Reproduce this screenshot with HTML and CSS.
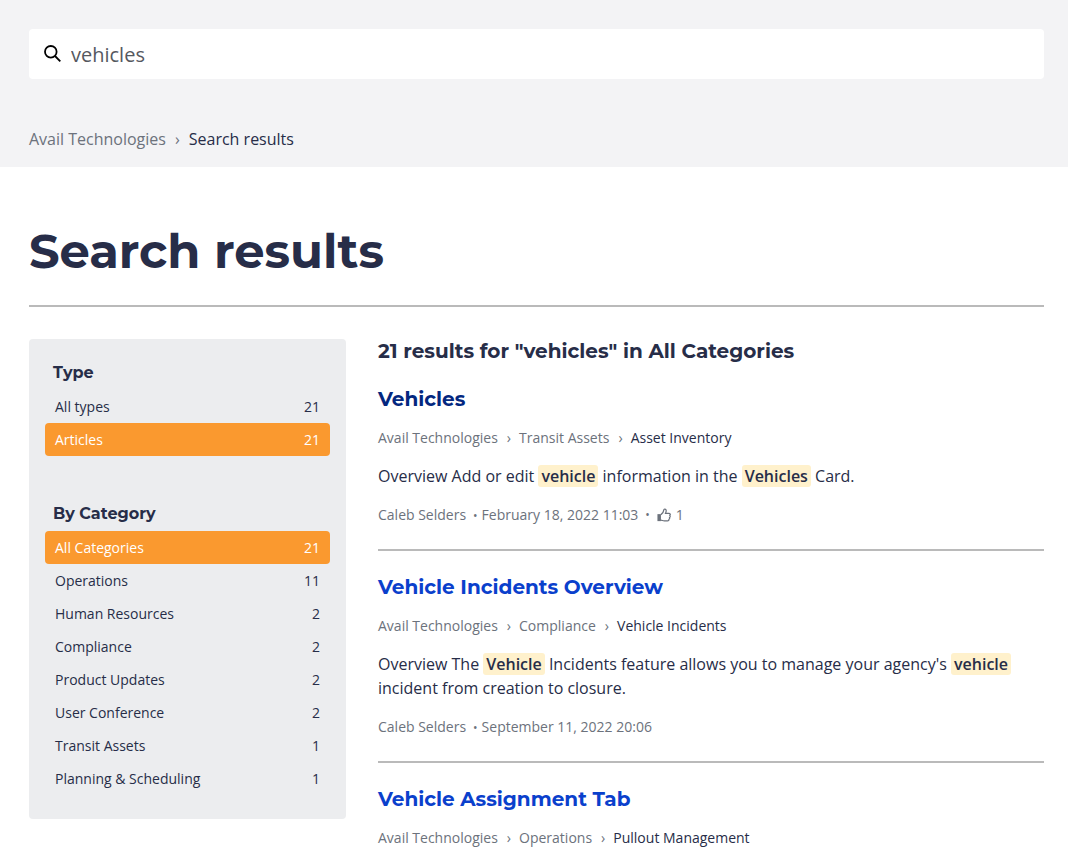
FILE: index.html
```html
<!DOCTYPE html>
<html lang="en">
<head>
<meta charset="utf-8">
<meta name="viewport" content="width=device-width, initial-scale=1">
<title>Search results – Avail Technologies</title>
<link rel="stylesheet" href="styles.css">
</head>
<body>
<header class="hero">
  <form class="search" role="search">
    <svg class="search-icon" viewBox="0 0 18 18" aria-hidden="true"><circle cx="6.800" cy="6.800" r="5.800"/><path d="M11 11l5.300 5.300"/></svg>
    <input class="search-input" type="search" value="vehicles" aria-label="Search">
  </form>
  <nav class="crumbs crumbs-page" aria-label="Breadcrumb">
    <a href="#">Avail Technologies</a><span class="sep">›</span><span class="current">Search results</span>
  </nav>
</header>
<main class="page">
  <h1 class="page-title">Search results</h1>
  <div class="columns">
    <aside class="sidebar">
      <section>
        <h2 class="filter-title">Type</h2>
        <ul class="filters">
          <li><a class="filter" href="#"><span>All types</span><span>21</span></a></li>
          <li><a class="filter active" href="#" aria-current="page"><span>Articles</span><span>21</span></a></li>
        </ul>
      </section>
      <section>
        <h2 class="filter-title">By Category</h2>
        <ul class="filters">
          <li><a class="filter active" href="#" aria-current="page"><span>All Categories</span><span>21</span></a></li>
          <li><a class="filter" href="#"><span>Operations</span><span>11</span></a></li>
          <li><a class="filter" href="#"><span>Human Resources</span><span>2</span></a></li>
          <li><a class="filter" href="#"><span>Compliance</span><span>2</span></a></li>
          <li><a class="filter" href="#"><span>Product Updates</span><span>2</span></a></li>
          <li><a class="filter" href="#"><span>User Conference</span><span>2</span></a></li>
          <li><a class="filter" href="#"><span>Transit Assets</span><span>1</span></a></li>
          <li><a class="filter" href="#"><span>Planning &amp; Scheduling</span><span>1</span></a></li>
        </ul>
      </section>
    </aside>
    <section class="results">
      <h2 class="results-title">21 results for "vehicles" in All Categories</h2>
      <article class="result">
        <h3 class="result-title"><a class="focused" href="#">Vehicles</a></h3>
        <nav class="crumbs" aria-label="Article location">
          <a href="#">Avail Technologies</a><span class="sep">›</span><a href="#">Transit Assets</a><span class="sep">›</span><a class="current" href="#">Asset Inventory</a>
        </nav>
        <p class="excerpt">Overview Add or edit <mark>vehicle</mark> information in the <mark>Vehicles</mark> Card.</p>
        <div class="meta">
          <span>Caleb Selders</span><span class="dated">February 18, 2022 11:03</span>
          <span class="votes"><svg class="thumb" viewBox="0 0 16 16" aria-hidden="true"><path class="cuff" d="M.5 7h4v8h-4z"/><path d="M4.500 7.600C6.400 6.500 7.500 4.500 7.800 2.200c.2-1.300 2.500-1.100 2.700.7.1 1.200-.3 2.300-.8 3.300h3.800c1.800 0 2.100 1.600 1.100 2.500.8.8.6 1.900-.3 2.300.4.9.1 1.600-.7 1.900.2 1-.3 1.800-1.500 1.800H8.300c-1.400 0-2.400-.7-3.800-.9"/></svg>1</span>
        </div>
      </article>
      <article class="result">
        <h3 class="result-title"><a href="#">Vehicle Incidents Overview</a></h3>
        <nav class="crumbs" aria-label="Article location">
          <a href="#">Avail Technologies</a><span class="sep">›</span><a href="#">Compliance</a><span class="sep">›</span><a class="current" href="#">Vehicle Incidents</a>
        </nav>
        <p class="excerpt">Overview The <mark>Vehicle</mark> Incidents feature allows you to manage your agency's <mark>vehicle</mark> incident from creation to closure.</p>
        <div class="meta">
          <span>Caleb Selders</span><span class="dated">September 11, 2022 20:06</span>
        </div>
      </article>
      <article class="result">
        <h3 class="result-title"><a href="#">Vehicle Assignment Tab</a></h3>
        <nav class="crumbs" aria-label="Article location">
          <a href="#">Avail Technologies</a><span class="sep">›</span><a href="#">Operations</a><span class="sep">›</span><a class="current" href="#">Pullout Management</a>
        </nav>
      </article>
    </section>
  </div>
</main>
</body>
</html>
```
FILE: styles.css
```css
* { box-sizing: border-box; }

body {
  margin: 0;
  background: #fff;
  color: #272d48;
  font: 400 16px/24px "Open Sans", sans-serif;
}

h1, h2, h3, p, ul { margin: 0; padding: 0; }
ul { list-style: none; }
a { color: inherit; text-decoration: none; }

h1, h2, h3 {
  font-family: Montserrat, Inter, sans-serif;
  font-weight: 700;
}

.hero {
  padding: 29px 24px 16px 29px;
  background: #f3f3f5;
}

.search {
  display: flex;
  align-items: center;
  gap: 9px;
  height: 50px;
  padding: 0 15px;
  margin-bottom: 48px;
  background: #fff;
  border-radius: 4px;
}

.search-icon {
  flex: none;
  width: 18px;
  height: 18px;
  fill: none;
  stroke: #000;
  stroke-width: 1.8;
}

.search-input {
  flex: 1;
  min-width: 0;
  padding: 2px 0 0;
  border: 0;
  outline: 0;
  background: none;
  color: #555860;
  font: 400 20px/30px "Open Sans", sans-serif;
  appearance: none;
}

.search-input::-webkit-search-cancel-button { display: none; }

.crumbs {
  display: flex;
  flex-wrap: wrap;
  color: #6c727c;
  font-size: 14px;
  line-height: 21px;
}

.crumbs .sep { margin: 0 8px 0 9px; }
.crumbs .current { color: #272d48; }

.crumbs-page {
  font-size: 16px;
  line-height: 24px;
}

.crumbs-page .sep { margin: 0 9px; }

.page { padding: 55px 24px 0 29px; }

.page-title {
  padding-bottom: 25px;
  margin-bottom: 32px;
  border-bottom: 2px solid #bababa;
  font-size: 48px;
  line-height: 58px;
}

.columns {
  display: grid;
  grid-template-columns: 317px minmax(0, 1fr);
  align-items: start;
  gap: 32px;
}

.sidebar {
  display: grid;
  gap: 48px;
  padding: 24px 16px;
  background: #ecedef;
  border-radius: 4px;
}

.filter-title {
  margin: 0 8px 8px;
  font-size: 16px;
  line-height: 19px;
}

.filter {
  display: flex;
  justify-content: space-between;
  padding: 6px 10px;
  border-radius: 4px;
  font-size: 14px;
  line-height: 21px;
}

.filter.active {
  background: #fa992f;
  color: #fff;
}

.results-title {
  margin-bottom: 24px;
  font-size: 20px;
  line-height: 24px;
}

.result {
  display: grid;
  gap: 16px;
}

.result + .result {
  margin-top: 24px;
  padding-top: 24px;
  border-top: 2px solid #bababa;
}

.result-title {
  color: #0a40cc;
  font-size: 20px;
  line-height: 24px;
}

.result-title .focused { color: #03277f; }

mark {
  padding: 0 3px;
  border-radius: 3px;
  background: #fff1cc;
  color: inherit;
  font-weight: 600;
}

.meta {
  display: flex;
  color: #6c727c;
  font-size: 14px;
  line-height: 21px;
}

.meta .dated::before,
.votes::before {
  content: "•";
  font-size: 12px;
  line-height: 0;
}

.meta .dated::before { margin: 0 4px 0 7px; }

.votes {
  display: flex;
  align-items: center;
}

.votes::before { margin: 0 7px; }

.thumb {
  width: 14px;
  height: 14px;
  margin-right: 5px;
  fill: none;
  stroke: currentColor;
  stroke-width: 1.4;
}

.thumb .cuff { fill: currentColor; stroke: none; }
```
